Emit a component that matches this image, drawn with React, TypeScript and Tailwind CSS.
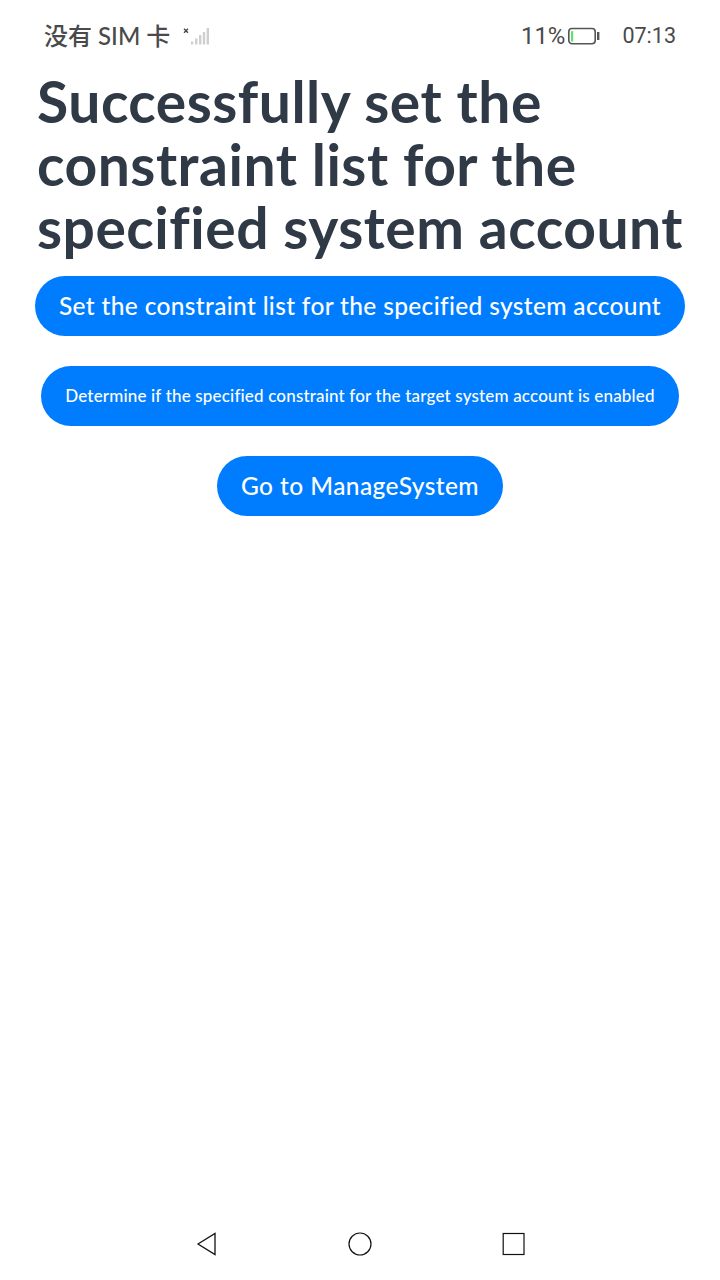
const lines = ["Successfully set the", "constraint list for the", "specified system account"];

function Signal() {
  return (
    <svg className="ml-[13px] block" width="27" height="20" viewBox="0 0 27 20">
      <path d="M1 2.8l4 4M5 2.8l-4 4" stroke="#444" strokeWidth="1.4" fill="none" />
      <g fill="#cfcfcf">
        <rect x="8" y="15.5" width="2.2" height="3" />
        <rect x="12" y="12.5" width="2.4" height="6" />
        <rect x="16" y="9" width="2.4" height="9.5" />
        <rect x="19.8" y="6" width="2.4" height="12.5" />
        <rect x="23.6" y="2" width="2.4" height="16.5" />
      </g>
    </svg>
  );
}

function Battery() {
  return (
    <svg className="ml-[2px] block" width="34" height="18" viewBox="0 0 34 18">
      <rect x="1.8" y="1.5" width="26.4" height="15.2" rx="3.2" fill="none" stroke="#555" strokeWidth="1.6" />
      <rect x="4" y="4" width="2.2" height="10.5" rx="0.6" fill="#5fe36c" />
      <rect x="30" y="5" width="2.4" height="8" fill="#555" />
    </svg>
  );
}

export default function App() {
  return (
    <div className="flex h-[1280px] w-[720px] flex-col bg-white font-['Lato','Noto_Sans_CJK_SC',sans-serif]">
      <header className="flex h-[70px] items-start pt-[24px] pr-[44px] pl-[44px] text-[#4a4a4a]">
        <div className="flex h-6 items-center text-[24px] leading-6 font-medium whitespace-pre">
          <span className="-mt-px">没有 SIM 卡</span>
          <Signal />
        </div>
        <div className="ml-auto flex h-6 items-center font-['Roboto',sans-serif]">
          <span className="text-[24px] leading-6">11%</span>
          <Battery />
          <span className="ml-[21px] text-[21.5px] leading-6">07:13</span>
        </div>
      </header>
      <main className="flex flex-1 flex-col items-center">
        <h1 className="mb-[17px] ml-[37px] self-start text-[57px] leading-[63px] font-bold tracking-[0.5px] whitespace-nowrap text-[#303a47]">
          {lines.map((line) => (
            <span key={line} className="block">
              {line}
            </span>
          ))}
        </h1>
        <div className="flex flex-col items-center gap-[30px] font-medium whitespace-nowrap text-white">
          <button className="h-[60px] w-[650px] rounded-full bg-[#007dff] text-[24.5px] tracking-[0.34px]">
            Set the constraint list for the specified system account
          </button>
          <button className="h-[60px] w-[638px] rounded-full bg-[#007dff] text-[17px] tracking-[0.17px]">
            Determine if the specified constraint for the target system account is enabled
          </button>
          <button className="h-[60px] w-[286px] rounded-full bg-[#007dff] text-[24.5px] tracking-[0.42px]">
            Go to ManageSystem
          </button>
        </div>
      </main>
      <nav className="flex h-[72px] items-center justify-center gap-[130px]">
        <svg width="24" height="24" viewBox="0 0 24 24" fill="none" stroke="#111" strokeWidth="1.3">
          <path d="M4 12L21 1.5v21z" />
        </svg>
        <svg width="24" height="24" viewBox="0 0 24 24" fill="none" stroke="#111" strokeWidth="1.2">
          <circle cx="12" cy="12" r="11" />
        </svg>
        <svg width="24" height="24" viewBox="0 0 24 24" fill="none" stroke="#111" strokeWidth="1.2">
          <rect x="1.2" y="1.5" width="20.8" height="21" />
        </svg>
      </nav>
    </div>
  );
}
